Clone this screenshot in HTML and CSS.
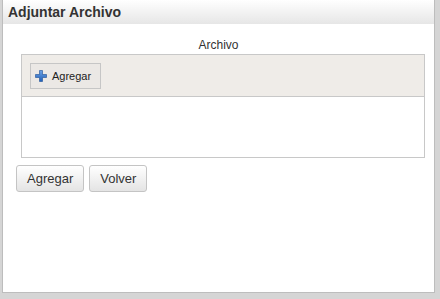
FILE: index.html
```html
<!DOCTYPE html>
<html lang="es">
<head>
    <meta charset="UTF-8">
    <title>Adjuntar Archivo</title>
    <link rel="stylesheet" href="styles.css">
</head>
<body>
    <div class="dialog">
        <div class="dialog-title">Adjuntar Archivo</div>
        <div class="dialog-body">
            <div class="label">Archivo</div>
            <div class="upload">
                <div class="upload-bar">
                    <button class="add-file">
                        <svg width="12" height="12" viewBox="0 0 12 12">
                            <defs>
                                <linearGradient id="blue" x1="0" y1="0" x2="0" y2="1">
                                    <stop offset="0" stop-color="#6ea3e6"/>
                                    <stop offset="1" stop-color="#1f5fb8"/>
                                </linearGradient>
                            </defs>
                            <path d="M4.5 0.5h3v4h4v3h-4v4h-3v-4h-4v-3h4z" fill="url(#blue)" stroke="#1d4f96" stroke-width="0.6"/>
                        </svg>
                        Agregar
                    </button>
                </div>
                <div class="upload-list"></div>
            </div>
            <div class="actions">
                <button class="btn">Agregar</button>
                <button class="btn">Volver</button>
            </div>
        </div>
    </div>
</body>
</html>
```

FILE: styles.css
```css
body {
    margin: 0;
    background-color: #d5d5d5;
    font-family: "Liberation Sans", Arial, sans-serif;
    color: #333;
    height: 299px;
    overflow: hidden;
}
.dialog {
    margin-left: 2px;
    width: 431px;
    height: 292px;
    background-color: white;
    border: 1px solid #bdbdbd;
    border-top: none;
}
.dialog-title {
    height: 24px;
    line-height: 25px;
    padding-left: 5px;
    font-size: 14px;
    font-weight: bold;
    color: #333;
    background: linear-gradient(#ffffff, #e6e6e6);
}
.dialog-body {
    padding-top: 14px;
}
.label {
    text-align: center;
    font-size: 12px;
    line-height: 14px;
    margin-bottom: 2px;
}
.upload {
    margin-left: 18px;
    width: 402px;
    border: 1px solid #c8c8c8;
}
.upload-bar {
    height: 42px;
    background-color: #efece8;
    border-bottom: 1px solid #c8c8c8;
    padding: 8px 0 0 8px;
    box-sizing: border-box;
}
.add-file {
    display: flex;
    align-items: center;
    gap: 5px;
    height: 26px;
    width: 71px;
    padding: 0 0 0 4px;
    font-family: "Liberation Sans", Arial, sans-serif;
    font-size: 11px;
    color: #222;
    background-color: #ebe8e5;
    border: 1px solid #c6c6c6;
}
.upload-list {
    height: 60px;
}
.actions {
    display: flex;
    gap: 5px;
    margin: 7px 0 0 13px;
}
.btn {
    height: 27px;
    padding: 0 10px;
    font-family: "Liberation Sans", Arial, sans-serif;
    font-size: 13px;
    color: #333;
    background: linear-gradient(#ffffff, #e4e4e4);
    border: 1px solid #c4c4c4;
    border-radius: 3px;
}
```
